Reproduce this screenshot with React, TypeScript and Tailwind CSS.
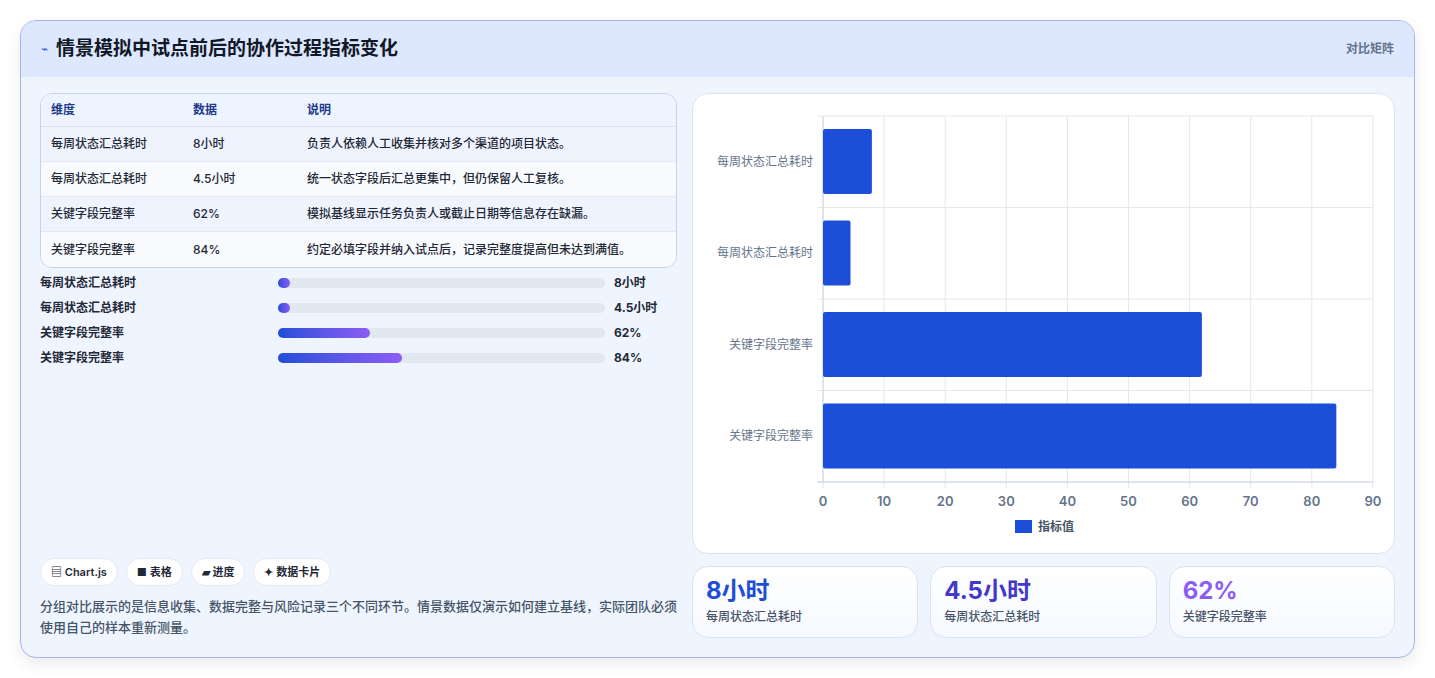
const rows = [
  { name: '每周状态汇总耗时', value: '8小时', note: '负责人依赖人工收集并核对多个渠道的项目状态。', num: 8, pct: '0%' },
  { name: '每周状态汇总耗时', value: '4.5小时', note: '统一状态字段后汇总更集中，但仍保留人工复核。', num: 4.5, pct: '0%' },
  { name: '关键字段完整率', value: '62%', note: '模拟基线显示任务负责人或截止日期等信息存在缺漏。', num: 62, pct: '28%' },
  { name: '关键字段完整率', value: '84%', note: '约定必填字段并纳入试点后，记录完整度提高但未达到满值。', num: 84, pct: '38%' },
];

const font = { fontFamily: 'Inter, "Noto Sans CJK SC", sans-serif' };

const Chart = () => {
  const x0 = 130, w = 550, y0 = 22, h = 366, unit = w / 90, band = h / 4;
  return (
    <svg width="703" height="461" viewBox="0 0 703 461" className="block">
      {Array.from({ length: 10 }).map((_, i) => (
        <g key={i}>
          <line x1={x0 + i * 61.1} y1={y0} x2={x0 + i * 61.1} y2={y0 + h + 6} stroke="#e5e7eb" />
          <text x={x0 + i * 61.1} y={y0 + h + 24} textAnchor="middle" fontSize="13" fill="#64748b" fontWeight="600">{i * 10}</text>
        </g>
      ))}
      {[0, 1, 2, 3, 4].map(i => (
        <line key={i} x1={x0 - 6} y1={y0 + i * band} x2={x0 + w} y2={y0 + i * band} stroke="#e5e7eb" />
      ))}
      <line x1={x0 - 6} y1={y0 + h} x2={x0 + w} y2={y0 + h} stroke="#cbd5e1" />
      <line x1={x0} y1={y0} x2={x0} y2={y0 + h} stroke="#cbd5e1" />
      {rows.map((r, i) => (
        <g key={i}>
          <rect x={x0} y={y0 + i * band + 13} width={r.num * unit} height={65} fill="#1d4ed8" rx="2" />
          <text x={x0 - 10} y={y0 + i * band + band / 2 + 4} textAnchor="end" fontSize="12" fill="#64748b">{r.name}</text>
        </g>
      ))}
      <rect x="322" y="426" width="17" height="13" fill="#1d4ed8" />
      <text x="345" y="437" fontSize="12" fill="#475569" fontWeight="600">指标值</text>
    </svg>
  );
};

export default function App() {
  return (
    <div className="w-[1435px] h-[678px] bg-white pt-5 pl-5" style={font}>
      <div className="w-[1395px] h-[638px] rounded-2xl border border-[#a5b4ec] bg-[#eff5ff] overflow-hidden shadow-[0_6px_16px_rgba(0,0,0,0.08)]">
        <div className="h-[56px] bg-[#dde7fd] flex items-center justify-between px-5">
          <div className="flex items-center gap-2">
            <span className="text-[#2563eb] text-xs">⌁</span>
            <h1 className="text-[19px] font-bold text-[#111827]">情景模拟中试点前后的协作过程指标变化</h1>
          </div>
          <span className="text-xs font-semibold text-[#64748b]">对比矩阵</span>
        </div>
        <div className="flex gap-[15px] px-[19px] pt-4">
          <div className="w-[638px] h-[545px] flex flex-col">
            <div className="rounded-xl border border-[#c7d2e8] bg-[#f5f8ff] overflow-hidden text-xs">
              <div className="flex h-[33px] items-center border-b border-[#d6deef] text-[#1e3a8a] font-semibold bg-[#eef4ff]">
                <div className="w-[152px] pl-[10px]">维度</div>
                <div className="w-[114px]">数据</div>
                <div>说明</div>
              </div>
              {rows.map((r, i) => (
                <div key={i} className={`flex h-[35px] items-center text-[#1f2937] ${i % 2 ? 'bg-[#f8fafd]' : 'bg-[#eef3fe]'} ${i < 3 ? 'border-b border-[#e3e8f3]' : ''}`}>
                  <div className="w-[152px] pl-[10px] font-medium">{r.name}</div>
                  <div className="w-[114px] font-medium">{r.value}</div>
                  <div className="font-medium">{r.note}</div>
                </div>
              ))}
            </div>
            <div className="mt-[7px] flex flex-col gap-[9px]">
              {rows.map((r, i) => (
                <div key={i} className="flex items-center h-[16px] text-xs font-semibold text-[#1f2937]">
                  <div className="w-[238px]">{r.name}</div>
                  <div className="w-[327px] h-[10px] rounded-full bg-[#e2e8f0]">
                    <div className="h-full rounded-full bg-gradient-to-r from-[#1d4ed8] to-[#8b5cf6] min-w-[12px]" style={{ width: r.pct }} />
                  </div>
                  <div className="ml-[9px] font-bold">{r.value}</div>
                </div>
              ))}
            </div>
            <div className="mt-auto">
              <div className="flex gap-2 text-[11px] font-semibold text-[#1f2937]">
                {['▤ Chart.js', '■ 表格', '▰ 进度', '✦ 数据卡片'].map(t => (
                  <span key={t} className="h-[28px] px-2.5 flex items-center rounded-full bg-white border border-[#e5e9f2]">{t}</span>
                ))}
              </div>
              <p className="mt-[10px] text-[13px] leading-[21px] text-[#475569] font-medium">分组对比展示的是信息收集、数据完整与风险记录三个不同环节。情景数据仅演示如何建立基线，实际团队必须使用自己的样本重新测量。</p>
            </div>
          </div>
          <div className="w-[703px] flex flex-col gap-3">
            <div className="h-[461px] rounded-2xl bg-white border border-[#dbe3f0] overflow-hidden"><Chart /></div>
            <div className="flex gap-3">
              {[
                { v: '8小时', l: '每周状态汇总耗时', c: 'text-[#1d4ed8]' },
                { v: '4.5小时', l: '每周状态汇总耗时', c: 'text-[#4338ca]' },
                { v: '62%', l: '关键字段完整率', c: 'text-[#8b5cf6]' },
              ].map(s => (
                <div key={s.v} className="flex-1 h-[72px] rounded-2xl border border-[#dbe3f0] bg-gradient-to-b from-white to-[#f6f9ff] px-[13px] pt-2">
                  <div className={`text-[24px] font-bold leading-8 ${s.c}`}>{s.v}</div>
                  <div className="text-xs font-medium text-[#475569] mt-0.5">{s.l}</div>
                </div>
              ))}
            </div>
          </div>
        </div>
      </div>
    </div>
  );
}
